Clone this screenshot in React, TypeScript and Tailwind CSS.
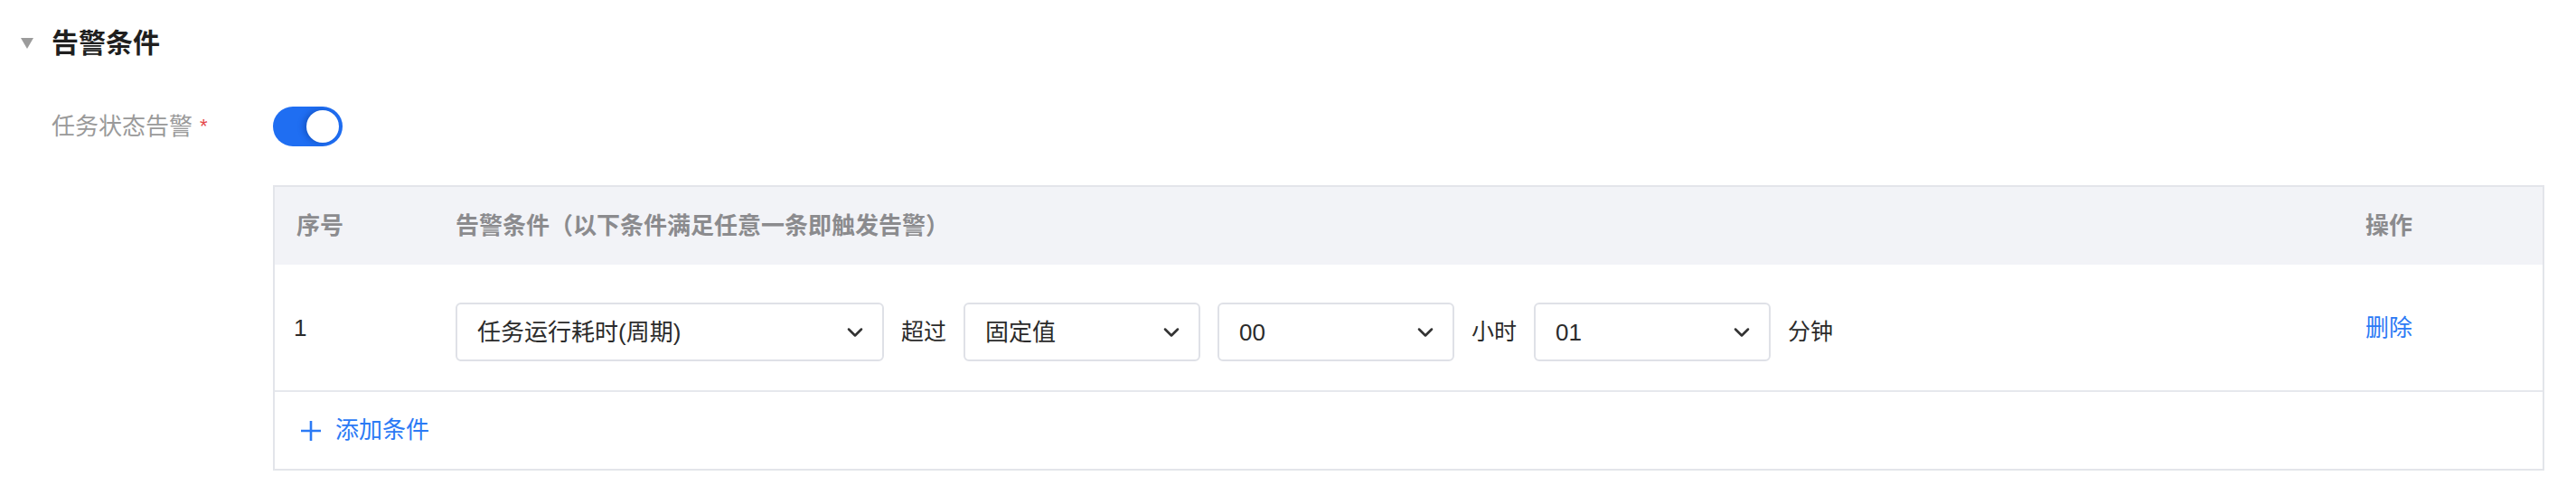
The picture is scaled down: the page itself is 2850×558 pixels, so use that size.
import { ChevronDown } from 'lucide-react';

const font = "font-['Liberation_Sans','Noto_Sans_CJK_SC',sans-serif]";

function Select({ value, width }: { value: string; width: string }) {
  return (
    <div
      className={`${width} h-[65px] flex items-center justify-between pl-[22px] pr-[16px] border-2 border-[#dfe1e7] rounded-[6px] bg-white`}
    >
      <span className="text-[26px] text-[#2b2b2b] leading-none">{value}</span>
      <ChevronDown size={28} strokeWidth={2.2} className="text-[#333]" />
    </div>
  );
}

export default function App() {
  return (
    <div className={`w-[2850px] h-[558px] bg-white ${font}`}>
      {/* Section title */}
      <div className="flex items-center pt-[30px] pl-[23px] h-[66px]">
        <svg width="14" height="12" viewBox="0 0 14 12">
          <polygon points="0,0 14,0 7,12" fill="#9b9b9b" />
        </svg>
        <h2 className="ml-[20px] text-[30px] leading-[36px] font-bold text-[#1f1f1f]">告警条件</h2>
      </div>

      {/* Toggle row */}
      <div className="flex items-center mt-[52px] h-[44px] pl-[57px]">
        <div className="w-[245px] flex items-center">
          <span className="text-[26px] text-[#9a9a9a] leading-none">任务状态告警</span>
          <span className="ml-[8px] text-[22px] text-[#e5484d] leading-none">*</span>
        </div>
        <button className="relative w-[77px] h-[44px] rounded-full bg-[#1f6ef2] flex items-center justify-end pr-[4px]">
          <span className="w-[36px] h-[36px] rounded-full bg-white shadow-[-3px_0_6px_rgba(0,40,120,0.35)]" />
        </button>
      </div>

      {/* Conditions table */}
      <div className="mt-[43px] ml-[302px] w-[2513px] border-2 border-[#e3e5ea]">
        <div className="grid grid-cols-[200px_1fr_220px] h-[86px] items-center bg-[#f2f3f7] text-[26px] font-bold text-[#8b8b8e]">
          <div className="pl-[24px]">序号</div>
          <div>告警条件（以下条件满足任意一条即触发告警）</div>
          <div className="pl-[24px]">操作</div>
        </div>
        <div className="grid grid-cols-[200px_1fr_220px] h-[141px] items-center border-b-2 border-[#e6e8ed] pt-[10px]">
          <div className="pl-[21px] text-[26px] text-[#2b2b2b] -mt-[8px]">1</div>
          <div className="flex items-center gap-[19px] text-[25px] text-[#2b2b2b]">
            <Select value="任务运行耗时(周期)" width="w-[474px]" />
            <span>超过</span>
            <Select value="固定值" width="w-[262px]" />
            <Select value="00" width="w-[262px]" />
            <span>小时</span>
            <Select value="01" width="w-[262px]" />
            <span>分钟</span>
          </div>
          <div className="pl-[24px] text-[26px] text-[#2b7af5] -mt-[8px]">删除</div>
        </div>
        <div className="flex items-center h-[85px] pl-[28px] text-[26px] text-[#2b7af5]">
          <svg width="24" height="24" viewBox="0 0 24 24">
            <path d="M12 1v22M1 12h22" stroke="#2b7af5" strokeWidth="2.6" />
          </svg>
          <span className="ml-[15px]">添加条件</span>
        </div>
      </div>
    </div>
  );
}
